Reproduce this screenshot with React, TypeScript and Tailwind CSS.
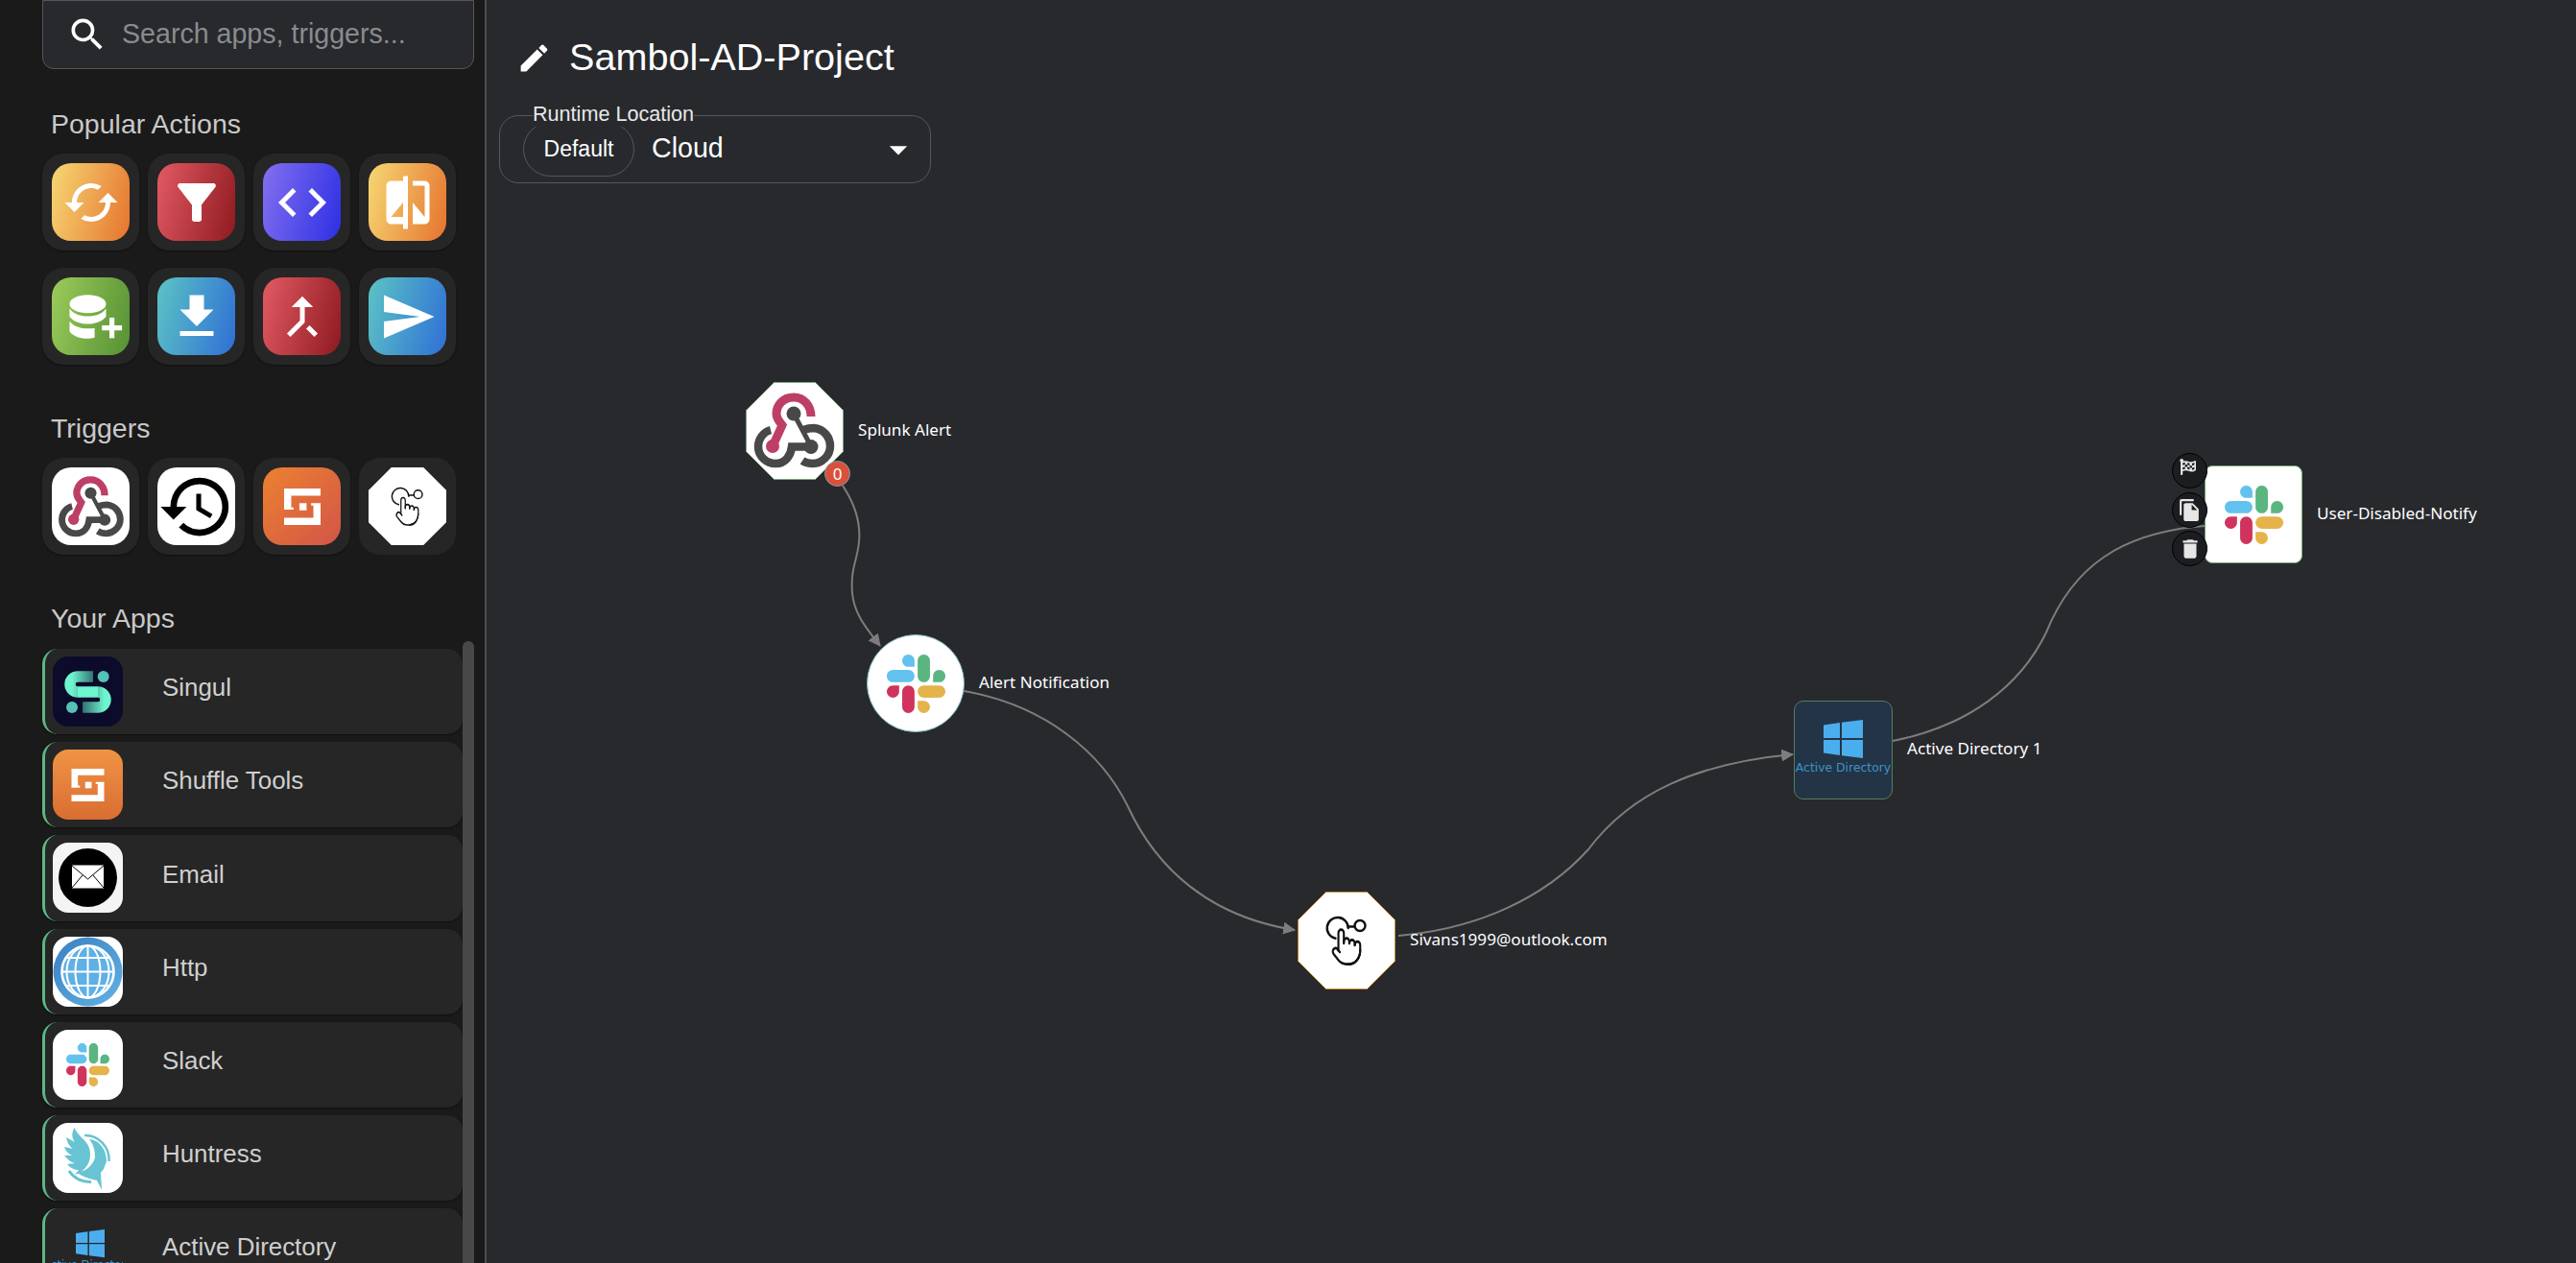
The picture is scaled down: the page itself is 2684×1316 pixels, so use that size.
import React from "react";
import {
  MdCached,
  MdFilterAlt,
  MdCode,
  MdCompare,
  MdFileDownload,
  MdCallMerge,
  MdSend,
  MdHistory,
  MdSearch,
  MdEdit,
  MdArrowDropDown,
  MdFileCopy,
  MdDelete,
} from "react-icons/md";
import { FaFlagCheckered } from "react-icons/fa";

const SlackLogo = ({ className }: { className: string }) => (
  <svg viewBox="0 0 122.8 122.8" className={className}>
    <path d="M25.8 77.6c0 7.1-5.8 12.9-12.9 12.9S0 84.7 0 77.6s5.8-12.9 12.9-12.9h12.9v12.9z" fill="#d0335c" />
    <path d="M32.3 77.6c0-7.1 5.8-12.9 12.9-12.9s12.9 5.8 12.9 12.9v32.3c0 7.1-5.8 12.9-12.9 12.9s-12.9-5.8-12.9-12.9V77.6z" fill="#d0335c" />
    <path d="M45.2 25.8c-7.1 0-12.9-5.8-12.9-12.9S38.1 0 45.2 0s12.9 5.8 12.9 12.9v12.9H45.2z" fill="#63c1ee" />
    <path d="M45.2 32.3c7.1 0 12.9 5.8 12.9 12.9s-5.8 12.9-12.9 12.9H12.9C5.8 58.1 0 52.3 0 45.2s5.8-12.9 12.9-12.9h32.3z" fill="#63c1ee" />
    <path d="M97 45.2c0-7.1 5.8-12.9 12.9-12.9s12.9 5.8 12.9 12.9-5.8 12.9-12.9 12.9H97V45.2z" fill="#5ab580" />
    <path d="M90.5 45.2c0 7.1-5.8 12.9-12.9 12.9s-12.9-5.8-12.9-12.9V12.9C64.7 5.8 70.5 0 77.6 0s12.9 5.8 12.9 12.9v32.3z" fill="#5ab580" />
    <path d="M77.6 97c7.1 0 12.9 5.8 12.9 12.9s-5.8 12.9-12.9 12.9-12.9-5.8-12.9-12.9V97h12.9z" fill="#e4b44a" />
    <path d="M77.6 90.5c-7.1 0-12.9-5.8-12.9-12.9s5.8-12.9 12.9-12.9h32.3c7.1 0 12.9 5.8 12.9 12.9s-5.8 12.9-12.9 12.9H77.6z" fill="#e4b44a" />
  </svg>
);

const WebhookPaths = () => (
  <g fill="none" strokeLinecap="round">
    <path d="M68 36C68 24 60 16 50 16C39 16 32 24 32 33C32 39 36 42 38 45L28 67" stroke="#bd3f66" strokeWidth="9" strokeLinecap="butt" />
    <circle cx="28" cy="67" r="7" fill="#bd3f66" />
    <path d="M26 50C18 52 13 60 13 67C13 78 22 85 31 85C42 85 47 76 48 67.5H68" stroke="#484848" strokeWidth="8.5" strokeLinecap="butt" />
    <path d="M50 33L68 67" stroke="#484848" strokeWidth="5" />
    <circle cx="50" cy="33" r="7.5" fill="#484848" />
    <circle cx="68" cy="67.5" r="7.5" fill="#484848" />
    <path d="M60 50C64 48.5 68 48 71 48C81 49 88 57 88 67C88 77 79 85 70 85C66 85 62 84 59 82" stroke="#484848" strokeWidth="8.5" strokeLinecap="butt" />
  </g>
);

const WebhookLogo = () => (
  <svg viewBox="0 0 100 100" className="w-full h-full">
    <WebhookPaths />
  </svg>
);

// drawn in a 102 box, the size of a node on the canvas
const HandPaths = ({ width }: { width: number }) => (
  <g fill="none" stroke="#111" strokeWidth={width} strokeLinecap="round" strokeLinejoin="round">
    <path d="M39.5 48.8A11 11 0 1 1 52.7 38" />
    <path d="M52.7 36.5H59.5" />
    <circle cx="65" cy="35.5" r="5.5" />
    <g transform="translate(34 36) scale(1.42 1.8)" strokeWidth={width / 1.6}>
      <path d="M22 14a8 8 0 0 1-8 8" />
      <path d="M18 11v-1a2 2 0 0 0-2-2a2 2 0 0 0-2 2" />
      <path d="M14 10V9a2 2 0 0 0-2-2a2 2 0 0 0-2 2v1" />
      <path d="M10 9.5V4a2 2 0 0 0-2-2a2 2 0 0 0-2 2v10" />
      <path d="M18 11a2 2 0 1 1 4 0v3a8 8 0 0 1-8 8h-2c-2.8 0-4.5-.86-5.99-2.34l-3.6-3.6a2 2 0 0 1 2.83-2.82L7 15" />
    </g>
  </g>
);

const ShuffleLogo = ({ className }: { className: string }) => (
  <svg viewBox="0 0 112 112" className={className} fill="#fff">
    <path d="M0 0H112V22H22V58H29V65H0Z" />
    <rect x="47" y="45" width="22" height="22" />
    <path d="M83 45H112V112H0V90H90V52H83Z" />
  </svg>
);

const DatabasePlus = () => (
  <svg viewBox="0 0 60 48" className="w-[57px] h-[48px] translate-x-[6px]" fill="#fff">
    <ellipse cx="20.5" cy="10" rx="20" ry="10" />
    <path d="M0.5 15C5 21 12 23.5 20.5 23.5S36 21 40.5 15V24C36 29.5 28 32 20.5 32S5 29.5 0.5 24Z" />
    <path d="M0.5 29C5 34.5 12 37 20.5 37C24 37 27 36.6 28 36.3V47C25 47.6 23 48 20.5 48C10 48 3 44 0.5 40Z" />
    <rect x="36" y="33.5" width="22" height="5.5" />
    <rect x="44.2" y="25" width="5.5" height="22.5" />
  </svg>
);

const WindowsLogo = ({ className }: { className: string }) => (
  <svg viewBox="0 0 41 41" className={className} fill="#4aaeee">
    <path d="M0 5.5L17 3V19H0Z" />
    <path d="M19 2.7L41 0V19H19Z" />
    <path d="M0 21H17V37L0 34.5Z" />
    <path d="M19 21H41V40L19 37.3Z" />
  </svg>
);

const SingulLogo = () => (
  <svg viewBox="0 0 73 73" className="w-full h-full">
    <defs>
      <linearGradient id="singulTop" gradientUnits="userSpaceOnUse" x1="44" y1="0" x2="20" y2="0">
        <stop offset="0" stopColor="#2f6a6c" />
        <stop offset="1" stopColor="#6ef5cf" />
      </linearGradient>
      <linearGradient id="singulBottom" gradientUnits="userSpaceOnUse" x1="30" y1="0" x2="54" y2="0">
        <stop offset="0" stopColor="#2f6a6c" />
        <stop offset="1" stopColor="#6ef5cf" />
      </linearGradient>
    </defs>
    <g fill="none" strokeWidth="11.5">
      <path d="M42 21H26A8 8 0 0 0 26 37" stroke="url(#singulTop)" />
      <path d="M26 37H47" stroke="#6ef5cf" />
      <path d="M47 37A8 8 0 0 1 47 53H31" stroke="url(#singulBottom)" />
    </g>
    <circle cx="52.7" cy="21" r="6" fill="#55c2b5" />
    <circle cx="20" cy="53" r="6" fill="#55c2b5" />
  </svg>
);

const EmailLogo = () => (
  <svg viewBox="0 0 73 73" className="w-full h-full">
    <circle cx="36.5" cy="36.5" r="30.5" fill="#000" />
    <rect x="20" y="23.5" width="33" height="24" fill="#fff" />
    <path d="M20 24L36.5 38L53 24M20 47L31 34M53 47L42 34" fill="none" stroke="#000" strokeWidth="1" />
  </svg>
);

const GlobeLogo = () => (
  <svg viewBox="0 0 73 73" className="w-full h-full">
    <defs>
      <linearGradient id="globeRing" x1="0" y1="0" x2="1" y2="1">
        <stop offset="0" stopColor="#3b7fc0" />
        <stop offset="1" stopColor="#62b2e4" />
      </linearGradient>
    </defs>
    <circle cx="36.5" cy="36.5" r="36" fill="url(#globeRing)" />
    <circle cx="36.5" cy="36.5" r="27" fill="#5fb0e6" stroke="#fff" strokeWidth="2.6" />
    <g fill="none" stroke="#fff" strokeWidth="2">
      <ellipse cx="36.5" cy="36.5" rx="13" ry="27" />
      <ellipse cx="36.5" cy="36.5" rx="22" ry="27" />
      <path d="M36.5 9.5V63.5M9.5 36.5H63.5M14 22H59M14 51H59" />
    </g>
  </svg>
);

const HuntressLogo = () => (
  <svg viewBox="0 0 73 73" className="w-full h-full">
    <g fill="#68c4d2">
      <path d="M22.5 5C19 11 20 16 23 20L14 15C15 21 18 25 21 27L12 25C13 29 16 32 20 34L12 34C15 38 19 41 23 42L15 43C18 47 23 49 27 49L23 54C28 53 33 49 36 44C40 38 40 28 36 22C33 17 26 13 22.5 5Z" />
      <path d="M38 17C49 18 56 28 56 40L53 48L50 52L51 70L46 60L38 58C32 56 28 54 26 52C35 50 42 44 44 36C44 28 42 22 38 17Z" />
    </g>
    <g fill="none" stroke="#68c4d2">
      <path d="M33 13A25 25 0 0 1 58.5 40" strokeWidth="2.5" />
      <path d="M17 50A25 25 0 0 0 40 61.5" strokeWidth="3" />
    </g>
  </svg>
);

const popularActions = [
  { icon: <MdCached size={60} color="#fff" />, tile: "bg-[linear-gradient(105deg,#f6d873,#e6732f)]" },
  { icon: <MdFilterAlt size={60} color="#fff" />, tile: "bg-[linear-gradient(105deg,#e35a64,#8e1a1f)]" },
  { icon: <MdCode size={60} color="#fff" />, tile: "bg-[linear-gradient(105deg,#8470f0,#2c2fe3)]" },
  { icon: <MdCompare size={60} color="#fff" />, tile: "bg-[linear-gradient(105deg,#f6d873,#e6732f)]" },
  { icon: <DatabasePlus />, tile: "bg-[linear-gradient(105deg,#9ccb5a,#559134)]" },
  { icon: <MdFileDownload size={60} color="#fff" />, tile: "bg-[linear-gradient(105deg,#5cc4c4,#2f6fd6)]" },
  { icon: <MdCallMerge size={60} color="#fff" />, tile: "bg-[linear-gradient(105deg,#e35a64,#8e1a1f)]" },
  { icon: <MdSend size={60} color="#fff" />, tile: "bg-[linear-gradient(105deg,#5cc4c4,#2f6fd6)]" },
];

const apps = [
  { name: "Singul", tile: "bg-[#0d0b2b]", logo: <SingulLogo /> },
  {
    name: "Shuffle Tools",
    tile: "bg-[linear-gradient(180deg,#f09445,#d96d32)]",
    logo: <ShuffleLogo className="w-[35px] h-[34px]" />,
  },
  { name: "Email", tile: "bg-[#f4f4f4]", logo: <EmailLogo /> },
  { name: "Http", tile: "bg-white", logo: <GlobeLogo /> },
  { name: "Slack", tile: "bg-white", logo: <SlackLogo className="w-[45px] h-[45px]" /> },
  { name: "Huntress", tile: "bg-white", logo: <HuntressLogo /> },
  {
    name: "Active Directory",
    tile: "bg-transparent",
    logo: (
      <div className="h-full flex flex-col items-center pt-[14px]">
        <WindowsLogo className="w-[30px] h-[30px] shrink-0 translate-x-[2px]" />
        <span className="text-[11.5px] leading-[14px] text-[#3c93c9] font-['DejaVu_Sans',sans-serif] whitespace-nowrap">
          Active Directory
        </span>
      </div>
    ),
  },
];

const ActionTile = ({ tile, children }: { tile: string; children: React.ReactNode }) => (
  <div className="w-[101px] h-[101px] rounded-[22px] bg-[#262626] flex items-center justify-center shadow-[0_1px_2px_rgba(0,0,0,0.4)]">
    <div className={`w-[81px] h-[81px] rounded-[20px] flex items-center justify-center overflow-hidden ${tile}`}>
      {children}
    </div>
  </div>
);

const SectionTitle = ({ className, children }: { className: string; children: React.ReactNode }) => (
  <h2 className={`h-[34px] leading-[34px] pl-[9px] text-[28.5px] text-[#c9c9c9] font-normal ${className}`}>{children}</h2>
);

const Sidebar = () => (
  <aside className="w-[505px] h-full shrink-0 bg-[#1a1a1a] pl-[44px] flex flex-col overflow-hidden">
    <div className="w-[450px] h-[72px] shrink-0 rounded-b-[12px] border border-[#565656] bg-[#27292d] flex items-center pl-[24px] gap-[14px] pb-[1px]">
      <MdSearch size={44} color="#fff" className="shrink-0" />
      <span className="text-[28.6px] text-[#8a8b8d]">Search apps, triggers...</span>
    </div>
    <SectionTitle className="mt-[40px] mb-[14px]">Popular Actions</SectionTitle>
    <div className="grid grid-cols-[repeat(4,101px)] gap-x-[9px] gap-y-[18px]">
      {popularActions.map((item, index) => (
        <ActionTile key={index} tile={item.tile}>
          {item.icon}
        </ActionTile>
      ))}
    </div>
    <SectionTitle className="mt-[49px] mb-[14px]">Triggers</SectionTitle>
    <div className="grid grid-cols-[repeat(4,101px)] gap-x-[9px]">
      <ActionTile tile="bg-white">
        <div className="w-[81px] h-[81px]">
          <WebhookLogo />
        </div>
      </ActionTile>
      <ActionTile tile="bg-white">
        <MdHistory size={82} color="#000" />
      </ActionTile>
      <ActionTile tile="bg-[linear-gradient(135deg,#ec8130,#d25548)]">
        <ShuffleLogo className="w-[38px] h-[38px]" />
      </ActionTile>
      <div className="w-[101px] h-[101px] rounded-[22px] bg-[#262626] flex items-center justify-center">
        <svg viewBox="0 0 102 102" className="w-[81px] h-[81px]">
          <polygon points="30,0 72,0 102,30 102,72 72,102 30,102 0,72 0,30" fill="#fff" />
          <HandPaths width={1.8} />
        </svg>
      </div>
    </div>
    <SectionTitle className="mt-[49px] mb-[7px]">Your Apps</SectionTitle>
    <div className="flex flex-1 min-h-0">
      <div className="w-[438px] pt-2 flex flex-col gap-2">
        {apps.map((app) => (
          <div
            key={app.name}
            className="h-[89.2px] shrink-0 rounded-[16px] border-l-[3px] border-[#5cb884] bg-[#262626] flex items-center pl-[8px] gap-[41px] shadow-[0_1px_2px_rgba(0,0,0,0.4)]"
          >
            <div className={`w-[73px] h-[73px] rounded-[16px] overflow-hidden shrink-0 ${app.tile}`}>
              <div className="w-full h-full flex items-center justify-center">{app.logo}</div>
            </div>
            <span className="text-[25.9px] text-[#cfcfcf] pb-[8px]">{app.name}</span>
          </div>
        ))}
      </div>
      <div className="w-[12px] h-full rounded-t-[6px] bg-[#484848]" />
    </div>
  </aside>
);

const NodeLabel = ({ children }: { children: React.ReactNode }) => (
  <span className="ml-[15px] pb-[3px] text-[17.1px] text-white whitespace-nowrap font-['Noto_Sans',sans-serif]">
    {children}
  </span>
);

const Octagon = ({ stroke, children }: { stroke: string; children: React.ReactNode }) => (
  <svg viewBox="0 0 102 102" className="w-[102px] h-[102px] shrink-0">
    <polygon points="29.5,0.5 72.5,0.5 101.5,29.5 101.5,72.5 72.5,101.5 29.5,101.5 0.5,72.5 0.5,29.5" fill="#fff" stroke={stroke} strokeLinejoin="round" />
    {children}
  </svg>
);

const NodeButton = ({ children }: { children: React.ReactNode }) => (
  <div className="w-[37px] h-[37px] rounded-full bg-[#1c1d20] border border-black flex items-center justify-center text-[#e6e6e6]">
    {children}
  </div>
);

const Edges = () => (
  <svg viewBox="507 0 2177 1316" className="absolute inset-0 w-[2177px] h-[1316px]" fill="none">
    <defs>
      <marker id="arrow" viewBox="0 0 12 12" refX="11" refY="6" markerWidth="13" markerHeight="13" markerUnits="userSpaceOnUse" orient="auto">
        <path d="M0 0L12 6L0 12Z" fill="#7d7d7d" />
      </marker>
    </defs>
    <g stroke="#7d7d7d" strokeWidth="2">
      <path d="M878 506C892 527 897 545 895 565C893 585 886 592 888 618C890 640 903 655 917 673" markerEnd="url(#arrow)" />
      <path d="M1004 720C1090 735 1148 785 1175 840C1205 905 1260 955 1349 969" markerEnd="url(#arrow)" />
      <path d="M1457 975C1540 968 1610 935 1655 885C1700 825 1770 795 1868 786" markerEnd="url(#arrow)" />
      <path d="M1972 772C2050 757 2105 715 2132 659C2160 590 2210 555 2297 548" />
    </g>
  </svg>
);

const Canvas = () => (
  <main className="relative flex-1 h-full border-l-2 border-[#4b4e55] bg-[#27292d] overflow-hidden">
    <Edges />

    <div className="absolute left-[270px] top-[398px] flex items-center">
      <Octagon stroke="#7fa682">
        <WebhookPaths />
      </Octagon>
      <NodeLabel>Splunk Alert</NodeLabel>
    </div>
    <div className="absolute left-[352px] top-[480px] w-[27px] h-[27px] rounded-full bg-[#d9513c] border border-[#7fa0a8] flex items-center justify-center text-[17px] text-white font-['Noto_Sans',sans-serif]">
      0
    </div>

    <div className="absolute left-[396px] top-[661px] flex items-center">
      <div className="w-[102px] h-[102px] rounded-full bg-white border border-[#7fb5c0] flex items-center justify-center">
        <SlackLogo className="w-[61px] h-[61px]" />
      </div>
      <NodeLabel>Alert Notification</NodeLabel>
    </div>

    <div className="absolute left-[845px] top-[929px] flex items-center">
      <Octagon stroke="#c48a2e">
        <HandPaths width={2.4} />
      </Octagon>
      <NodeLabel>Sivans1999@outlook.com</NodeLabel>
    </div>

    <div className="absolute left-[1362px] top-[730px] flex items-center">
      <div className="w-[103px] h-[103px] rounded-[10px] bg-[#233447] border border-[#5a7a5f] flex flex-col items-center pt-[19px]">
        <WindowsLogo className="w-[41px] h-[41px]" />
        <span className="mt-[1px] text-[12.4px] leading-[16px] text-[#3c93c9] whitespace-nowrap font-['DejaVu_Sans',sans-serif]">
          Active Directory
        </span>
      </div>
      <NodeLabel>Active Directory 1</NodeLabel>
    </div>

    <div className="absolute left-[1790px] top-[485px] flex items-center">
      <div className="w-[102px] h-[102px] rounded-[8px] bg-white border border-[#6fa474] flex items-center justify-center">
        <SlackLogo className="w-[61px] h-[61px]" />
      </div>
      <NodeLabel>User-Disabled-Notify</NodeLabel>
    </div>

    <div className="absolute left-[1756px] top-[472px] flex flex-col gap-[3.6px]">
      <NodeButton>
        <FaFlagCheckered size={17} className="-translate-x-[2px] -translate-y-[4px]" />
      </NodeButton>
      <NodeButton>
        <MdFileCopy size={25} />
      </NodeButton>
      <NodeButton>
        <MdDelete size={26} />
      </NodeButton>
    </div>

    <header className="relative pl-[13px] pt-[36px] flex flex-col items-start">
      <div className="flex items-center ml-[18px] h-[48px]">
        <MdEdit size={37} color="#fff" />
        <h1 className="ml-[18px] text-[39.6px] font-normal text-white">Sambol-AD-Project</h1>
      </div>
      <div className="relative mt-[36px] w-[450px] h-[71px] rounded-[20px] border border-[#55575c] flex items-center pl-[24px]">
        <span className="absolute left-[34px] top-[-15px] h-[26px] leading-[26px] bg-[#27292d] text-[21.6px] text-[#e8e8e8]">
          Runtime Location
        </span>
        <div className="w-[116px] h-[57px] rounded-full border border-[#55575c] flex items-center justify-center text-[23px] text-white">
          Default
        </div>
        <span className="ml-[18px] pb-[3px] text-[28.6px] text-white">Cloud</span>
        <MdArrowDropDown size={44} color="#fff" className="absolute right-[11px] top-[13px]" />
      </div>
    </header>
  </main>
);

const App = () => {
  return (
    <div className="flex w-full h-screen overflow-hidden font-['Liberation_Sans',Arial,sans-serif]">
      <Sidebar />
      <Canvas />
    </div>
  );
};

export default App;
